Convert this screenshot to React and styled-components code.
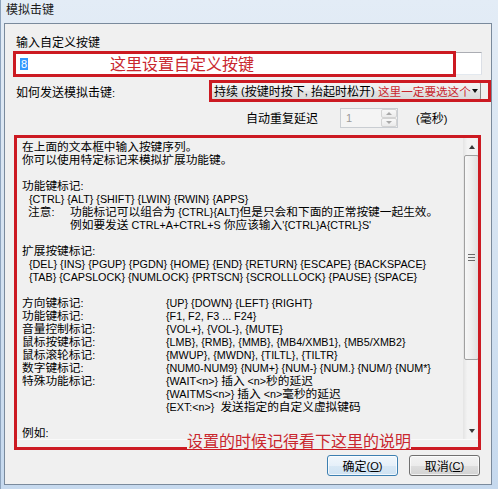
import styled, { createGlobalStyle } from "styled-components";

const RED = "#cc1a22";
const RED_TEXT = "#c9272e";

const GlobalStyle = createGlobalStyle`
  html, body {
    margin: 0;
    padding: 0;
  }
  body {
    width: 498px;
    height: 489px;
    overflow: hidden;
    font-family: "Noto Sans CJK SC", "Liberation Sans", sans-serif;
    color: #000;
  }
`;

const Window = styled.div`
  box-sizing: border-box;
  width: 498px;
  height: 489px;
  display: flex;
  flex-direction: column;
  padding: 0 6px 4px 3px;
  border-left: 1px solid #8da3bd;
  background: linear-gradient(180deg, #e3ecf6 0%, #d9e5f2 35%, #cfdff0 70%, #c6d9ee 100%);
`;

const TitleBar = styled.div`
  height: 23px;
  padding-left: 2px;
  font-size: 12px;
  line-height: 18px;
  color: #1a1a1a;
`;

const Client = styled.div`
  flex: 1;
  display: flex;
  flex-direction: column;
  padding: 0 9px;
  border: 1px solid #7a8a9c;
  background: #f0f0f0;
  font-size: 12px;
`;

const FieldLabel = styled.div`
  margin-top: 10px;
  padding-left: 2px;
  height: 16px;
  line-height: 16px;
`;

const InputWrap = styled.div`
  position: relative;
  margin-top: 2px;
  height: 23px;
`;

const TextField = styled.div`
  box-sizing: border-box;
  height: 100%;
  display: flex;
  align-items: center;
  padding-left: 5px;
  border: 1px solid;
  border-color: #abadb3 #dbdfe6 #e3e9ef #e2e3ea;
  background: #fff;
`;

const Selected = styled.span`
  background: #3399ff;
  color: #fff;
  font-family: "Liberation Sans", sans-serif;
  font-size: 11px;
  line-height: 12px;
  padding: 0 1px;
`;

const Annot = styled.div`
  position: absolute;
  top: ${(p) => p.$t}px;
  left: ${(p) => p.$l}px;
  right: ${(p) => p.$r}px;
  bottom: ${(p) => p.$b}px;
  border: 3px solid ${RED};
  pointer-events: none;
`;

const AnnotText = styled.span`
  position: absolute;
  left: ${(p) => p.$x}px;
  top: ${(p) => p.$y}px;
  font-size: ${(p) => p.$size}px;
  line-height: ${(p) => p.$lh}px;
  color: ${RED_TEXT};
  white-space: nowrap;
  background: ${(p) => p.$bg || "transparent"};
`;

const SendRow = styled.div`
  display: flex;
  align-items: center;
  margin-top: 5px;
  height: 22px;
  padding-left: 2px;
`;

const ComboWrap = styled.div`
  position: relative;
  margin-left: auto;
  margin-right: 1px;
  width: 270px;
  height: 20px;
`;

const Combo = styled.div`
  box-sizing: border-box;
  height: 100%;
  display: flex;
  align-items: center;
  padding-left: 2px;
  border: 1px solid #8a8a8a;
  border-radius: 3px;
  background: linear-gradient(180deg, #f4f4f4 0%, #ececec 50%, #e2e2e2 51%, #d9d9d9 100%);
  line-height: 16px;
  white-space: nowrap;
`;

const ComboArrow = styled.span`
  position: absolute;
  right: 3px;
  top: 8px;
  border-left: 3.5px solid transparent;
  border-right: 3.5px solid transparent;
  border-top: 4px solid #111;
`;

const DelayRow = styled.div`
  display: flex;
  align-items: center;
  margin-top: 6px;
  height: 20px;
  padding-left: 232px;
`;

const DelayLabel = styled.span`
  width: 72px;
  margin-right: 22px;
  line-height: 16px;
`;

const Spin = styled.div`
  box-sizing: border-box;
  display: flex;
  width: 58px;
  height: 20px;
  border: 1px solid #c9cdd2;
  background: #f4f4f4;
`;

const SpinValue = styled.div`
  flex: 1;
  padding-left: 5px;
  font-family: "Liberation Sans", sans-serif;
  font-size: 11px;
  line-height: 18px;
  color: #9a9a9a;
`;

const SpinButtons = styled.div`
  width: 16px;
  display: flex;
  flex-direction: column;
`;

const SpinBtn = styled.div`
  flex: 1;
  display: flex;
  align-items: center;
  justify-content: center;
  border: 1px solid #d3d3d3;
  border-radius: 2px;
  background: linear-gradient(180deg, #f8f8f8, #ebebeb);

  &::before {
    content: "";
    border-left: 3px solid transparent;
    border-right: 3px solid transparent;
    border-${(p) => (p.$up ? "bottom" : "top")}: 3px solid #a8a8a8;
  }
`;

const Unit = styled.span`
  margin-left: 18px;
  line-height: 16px;
`;

const TextSection = styled.div`
  position: relative;
  margin: 9px 1px 0 2px;
  height: 303px;
`;

const TextBox = styled.div`
  box-sizing: border-box;
  height: 100%;
  display: flex;
  border: 1px solid;
  border-color: #abadb3 #dbdfe6 #fafafa #e2e3ea;
  background: #f0f0f0;
`;

const TextBody = styled.div`
  flex: 1;
  padding: 1px 0 0 5px;
  overflow: hidden;
  font-size: 11.7px;
`;

const Line = styled.div`
  height: 13px;
  line-height: 13px;
  white-space: nowrap;
  padding-left: ${(p) => p.$indent || 0}px;
`;

const PairLine = styled(Line)`
  display: grid;
  grid-template-columns: ${(p) => p.$col}px 1fr;
`;

const Lat = styled.span`
  font-family: "Liberation Sans", sans-serif;
  font-size: 0.92em;
  white-space: pre;
`;

const ScrollBar = styled.div`
  width: 17px;
  display: flex;
  flex-direction: column;
  background: linear-gradient(90deg, #e4e4e4 0%, #f3f3f3 25%, #f3f3f3 75%, #e4e4e4 100%);
`;

const ScrollArrow = styled.div`
  height: 17px;
  display: flex;
  align-items: center;
  justify-content: center;

  &::before {
    content: "";
    border-left: 3.5px solid transparent;
    border-right: 3.5px solid transparent;
    border-${(p) => (p.$up ? "bottom" : "top")}: 4px solid #3a3a3a;
  }
`;

const Track = styled.div`
  flex: 1;
`;

const Thumb = styled.div`
  box-sizing: border-box;
  height: 205px;
  margin: 0 1px;
  display: flex;
  align-items: center;
  justify-content: center;
  border: 1px solid #a0a0a0;
  border-radius: 2px;
  background: linear-gradient(90deg, #f7f7f7 0%, #eeeeee 50%, #e0e0e0 100%);
`;

const Grip = styled.div`
  width: 7px;
  height: 7px;
  background: repeating-linear-gradient(180deg, #6a6a6a 0, #6a6a6a 1px, transparent 1px, transparent 3px);
`;

const ButtonRow = styled.div`
  display: flex;
  justify-content: flex-end;
  gap: 11px;
  margin-top: 15px;
  padding-right: 2px;
`;

const Button = styled.button`
  box-sizing: border-box;
  width: 71px;
  height: 21px;
  padding: 0;
  display: flex;
  align-items: center;
  justify-content: center;
  border: 1px solid ${(p) => (p.$primary ? "#3c7fb1" : "#707070")};
  border-radius: 3px;
  background: ${(p) =>
    p.$primary
      ? "linear-gradient(180deg, #f1f7fc 0%, #e6f0f9 50%, #d8e8f5 51%, #cfe2f2 100%)"
      : "linear-gradient(180deg, #f3f3f3 0%, #ececec 50%, #dedede 51%, #d3d3d3 100%)"};
  box-shadow: inset 0 0 0 1px rgba(255, 255, 255, 0.7);
  font-family: "Noto Sans CJK SC", sans-serif;
  font-size: 12px;
  line-height: 16px;
  color: #000;
`;

const Key = styled.span`
  font-family: "Liberation Sans", sans-serif;
  font-size: 11px;
`;

const CJK_RE = /([\u3000-\u303f\u4e00-\u9fff\uff00-\uffef]+)/;

const Mixed = ({ text }) =>
  text
    .split(CJK_RE)
    .filter(Boolean)
    .map((part, i) =>
      CJK_RE.test(part) ? <span key={i}>{part}</span> : <Lat key={i}>{part}</Lat>
    );

const pairs = [
  ["方向键标记:", "{UP} {DOWN} {LEFT} {RIGHT}"],
  ["功能键标记:", "{F1, F2, F3 ... F24}"],
  ["音量控制标记:", "{VOL+}, {VOL-}, {MUTE}"],
  ["鼠标按键标记:", "{LMB}, {RMB}, {MMB}, {MB4/XMB1}, {MB5/XMB2}"],
  ["鼠标滚轮标记:", "{MWUP}, {MWDN}, {TILTL}, {TILTR}"],
  ["数字键标记:", "{NUM0-NUM9} {NUM+} {NUM-} {NUM.} {NUM/} {NUM*}"],
  ["特殊功能标记:", "{WAIT<n>} 插入 <n>秒的延迟"],
  ["", "{WAITMS<n>} 插入 <n>毫秒的延迟"],
  ["", "{EXT:<n>}  发送指定的自定义虚拟键码"],
];

const App = () => {
  return (
    <>
      <GlobalStyle />
      <Window>
        <TitleBar>模拟击键</TitleBar>
        <Client>
          <FieldLabel>输入自定义按键</FieldLabel>
          <InputWrap>
            <TextField>
              <Selected>8</Selected>
            </TextField>
            <Annot $t={-1} $l={-1} $r={26} $b={-2}>
              <AnnotText $x={94} $y={0} $size={16} $lh={18}>
                这里设置自定义按键
              </AnnotText>
            </Annot>
          </InputWrap>

          <SendRow>
            <span>
              <Mixed text="如何发送模拟击键:" />
            </span>
            <ComboWrap>
              <Combo>
                <Mixed text="持续 (按键时按下, 抬起时松开)" />
              </Combo>
              <ComboArrow />
              <Annot $t={-1} $l={-2} $r={-10} $b={-1}>
                <AnnotText $x={166} $y={0} $size={11.6} $lh={16}>
                  这里一定要选这个
                </AnnotText>
              </Annot>
            </ComboWrap>
          </SendRow>

          <DelayRow>
            <DelayLabel>自动重复延迟</DelayLabel>
            <Spin>
              <SpinValue>1</SpinValue>
              <SpinButtons>
                <SpinBtn $up />
                <SpinBtn />
              </SpinButtons>
            </Spin>
            <Unit>
              <Mixed text="(毫秒)" />
            </Unit>
          </DelayRow>

          <TextSection>
            <TextBox>
              <TextBody>
                <Line>在上面的文本框中输入按键序列。</Line>
                <Line>你可以使用特定标记来模拟扩展功能键。</Line>
                <Line />
                <Line>
                  <Mixed text="功能键标记:" />
                </Line>
                <Line $indent={7}>
                  <Mixed text="{CTRL} {ALT} {SHIFT} {LWIN} {RWIN} {APPS}" />
                </Line>
                <PairLine $indent={6} $col={42}>
                  <span>
                    <Mixed text="注意:" />
                  </span>
                  <span>
                    <Mixed text="功能标记可以组合为 {CTRL}{ALT}但是只会和下面的正常按键一起生效。" />
                  </span>
                </PairLine>
                <Line $indent={48}>
                  <Mixed text="例如要发送 CTRL+A+CTRL+S 你应该输入'{CTRL}A{CTRL}S'" />
                </Line>
                <Line />
                <Line>
                  <Mixed text="扩展按键标记:" />
                </Line>
                <Line $indent={7}>
                  <Mixed text="{DEL} {INS} {PGUP} {PGDN} {HOME} {END} {RETURN} {ESCAPE} {BACKSPACE}" />
                </Line>
                <Line $indent={7}>
                  <Mixed text="{TAB} {CAPSLOCK} {NUMLOCK} {PRTSCN} {SCROLLLOCK} {PAUSE} {SPACE}" />
                </Line>
                <Line />
                {pairs.map(([label, value], i) => (
                  <PairLine key={i} $col={144}>
                    <span>
                      <Mixed text={label} />
                    </span>
                    <span>
                      <Mixed text={value} />
                    </span>
                  </PairLine>
                ))}
                <Line />
                <Line>
                  <Mixed text="例如:" />
                </Line>
              </TextBody>
              <ScrollBar>
                <ScrollArrow $up />
                <Track>
                  <Thumb>
                    <Grip />
                  </Thumb>
                </Track>
                <ScrollArrow />
              </ScrollBar>
            </TextBox>
            <Annot $t={-2} $l={-2} $r={0} $b={-10}>
              <AnnotText $x={170} $y={293} $size={16} $lh={18} $bg="#f0f0f0">
                设置的时候记得看下这里的说明
              </AnnotText>
            </Annot>
          </TextSection>

          <ButtonRow>
            <Button $primary>
              确定<Key>
                (<u>O</u>)
              </Key>
            </Button>
            <Button>
              取消<Key>
                (<u>C</u>)
              </Key>
            </Button>
          </ButtonRow>
        </Client>
      </Window>
    </>
  );
};

export default App;
